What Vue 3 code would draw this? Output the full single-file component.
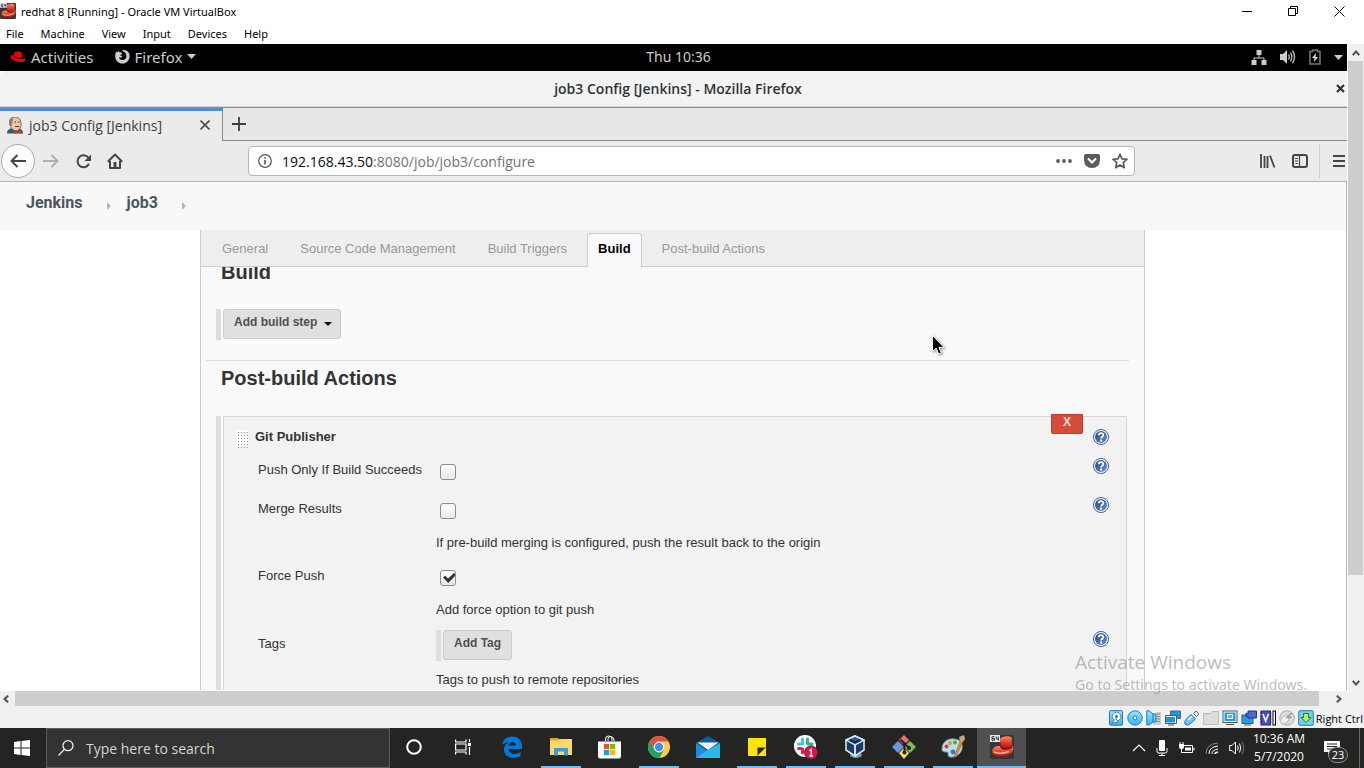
<script setup>
import { ref } from 'vue'

const vmMenu = ['File', 'Machine', 'View', 'Input', 'Devices', 'Help']
const sections = ['General', 'Source Code Management', 'Build Triggers', 'Build', 'Post-build Actions']
const activeSection = ref('Build')
const address = ref('192.168.43.50:8080/job/job3/configure')
const pushOnly = ref(false)
const mergeResults = ref(false)
const forcePush = ref(true)
const search = ref('')
</script>

<template>
  <div class="desktop">
    <svg class="defs" aria-hidden="true">
      <defs>
        <linearGradient id="helpFill" x1="0" y1="0" x2="1" y2="1">
          <stop offset="0" stop-color="#1d4283" />
          <stop offset="1" stop-color="#6b95cf" />
        </linearGradient>
        <linearGradient id="redHat" x1="0" y1="0" x2="0" y2="1">
          <stop offset="0" stop-color="#ff8a60" />
          <stop offset=".5" stop-color="#e8402a" />
          <stop offset="1" stop-color="#9c1610" />
        </linearGradient>
        <linearGradient id="blueBox" x1="0" y1="0" x2="0" y2="1">
          <stop offset="0" stop-color="#9be4ff" />
          <stop offset="1" stop-color="#35b4f5" />
        </linearGradient>
      </defs>
      <symbol id="help" viewBox="0 0 16 16">
        <circle cx="8" cy="8" r="7.5" fill="#fff" stroke="#355f9f" />
        <circle cx="8" cy="8" r="6" fill="url(#helpFill)" />
        <path d="M5.7 6.2C5.8 3.4 10.4 3.5 10.3 6.1C10.3 7.7 8.2 7.7 8.1 9.5" fill="none" stroke="#fff" stroke-width="1.8" />
        <rect x="7.1" y="10.6" width="2" height="2" fill="#fff" />
      </symbol>
      <symbol id="vmhat" viewBox="0 0 24 24">
        <rect width="24" height="24" rx="2" fill="#33363c" />
        <path d="M9 4C12 1 20 0 22 3L22 12C16 15 10 13 11 9Z" fill="url(#redHat)" />
        <path d="M2 16C3 12 6 11 10 11C11 14 17 15 23 11C25 17 19 22 12 21.500C6 21.500 2 20 2 16Z" fill="url(#redHat)" />
        <path d="M10.500 11.500C12 15 18 15 22.500 12" fill="none" stroke="#6e0f0b" stroke-width="1.200" />
        <path d="M4 17Q10 20 19 16.500" fill="none" stroke="#ffab88" stroke-width="1.600" />
        <rect width="10" height="7" fill="#e8eaee" />
        <path d="M4.500 1.700H2V5.300H4.500V3.500H2M6.300 1.500V4H9M8.300 1.500V5.700" fill="none" stroke="#333" />
      </symbol>
    </svg>

    <header class="vm-title">
      <svg class="vm-logo" viewBox="0 0 24 24"><use href="#vmhat" /></svg>
      <span class="vm-name">redhat 8 [Running] - Oracle VM VirtualBox</span>
      <button class="win-btn" aria-label="Minimize"><svg width="11" height="11" viewBox="0 0 11 11"><path d="M0 5.5H10" stroke="#000" /></svg></button>
      <button class="win-btn" aria-label="Restore"><svg width="11" height="11" viewBox="0 0 11 11" fill="none" stroke="#000"><path d="M.5 2.5H7.5V9.5H.5ZM2.5 2.5V.5H9.5V7.5H7.5" /></svg></button>
      <button class="win-btn" aria-label="Close"><svg width="11" height="11" viewBox="0 0 11 11"><path d="M.5 .5L10.500 10.500M10.500 .5L.5 10.500" stroke="#000" /></svg></button>
    </header>
    <nav class="vm-menu">
      <button v-for="m in vmMenu" :key="m">{{ m }}</button>
    </nav>

    <div class="viewport">
      <main class="guest">
        <div class="gnome">
          <button class="gnome-item">
            <svg width="16" height="12" viewBox="0 0 16 12"><path d="M4 3C4 1 6 0 7.500 .8C10 -.2 12 1 12 3L12.500 6C11 8 6 7 4 5Z" fill="#e00" /><path d="M3.500 4C1 4 0 5 .7 6.500C2 9.500 8 11.500 13 11C15.500 10.600 16 8.500 14 7C13 9 6 8 3.500 5.500Z" fill="#e00" /></svg>
            Activities
          </button>
          <button class="gnome-item firefox">
            <svg width="15" height="15" viewBox="0 0 15 15"><path d="M1 2.500L2.600 3.400L4 1.800L4.500 3.500C6 3 7 3.600 7 5L5 6.200C5.500 7 6.500 6.600 7.500 7C6.500 9 4.500 9 4 8C4 11 9 12.500 11 9C12 7 11 4 9 2.800C8 2 7 2 6.500 2.300C8 0 13 1 14.300 5C15.800 10 12 14.600 7.600 14.600C3 14.600 0 11 .2 7.200C.2 5.500 .5 4 1 2.500Z" fill="#ccc" /></svg>
            Firefox
            <svg width="9" height="5" viewBox="0 0 9 5"><path d="M0 0H9L4.500 5Z" fill="#ccc" /></svg>
          </button>
          <time class="gnome-clock">Thu 10:36</time>
          <div class="gnome-tray">
            <svg width="16" height="15" viewBox="0 0 16 15"><path d="M5.500 0H10.500V5H8.500V7.500H13.500V10H15.500V15H10.500V10H12.500V8.500H3.500V10H5.500V15H.5V10H2.500V7.500H7.500V5H5.500Z" fill="#ccc" /></svg>
            <svg width="16" height="14" viewBox="0 0 16 14"><path d="M0 4H3L7 0V14L3 10H0Z" fill="#ccc" /><path d="M8.500 4.500Q10 7 8.500 9.500M10.500 2.500Q13 7 10.500 11.500M12.500 .7Q16.500 7 12.500 13.300" fill="none" stroke="#bbb" stroke-width="1.400" /></svg>
            <svg width="12" height="16" viewBox="0 0 12 16"><path d="M1 2.500H3.500V1H8.500V2.500H11V15H1Z" fill="none" stroke="#777" stroke-width="1.600" /><path d="M7 4L3 9H5.500L5 13L9 8H6.500Z" fill="#ddd" /></svg>
            <svg width="9" height="5" viewBox="0 0 9 5"><path d="M0 0H9L4.500 5Z" fill="#ccc" /></svg>
          </div>
        </div>

        <div class="ff-title">
          <h1>job3 Config [Jenkins] - Mozilla Firefox</h1>
          <button aria-label="Close window"><svg width="9" height="9" viewBox="0 0 9 9"><path d="M1 1L8 8M8 1L1 8" stroke="#2e3436" stroke-width="2.200" /></svg></button>
        </div>

        <div class="ff-tabs">
          <div class="ff-tab">
            <svg width="16" height="17" viewBox="0 0 16 17"><path d="M0 16.500C0 13 2 12 5 11L12 11.500C15 12 16 14 16 16.500Z" fill="#2f5a72" /><path d="M3 4C3 1 6 0 8.500 0C12 0 14 3 14 7C14 11 12 14 9 14C5 13 3 10 3 7Z" fill="#edc9a2" stroke="#5a4438" stroke-width=".8" /><path d="M3 9C1 5 2 1 6 .6L5.500 5L4.500 9Z" fill="#8c7b6e" /><path d="M7.500 5H9M11 5H12.500M8 9.500H12" stroke="#493329" /><path d="M7 13L10.500 14.500L14 13V17L10.500 15.500L7 17Z" fill="#d33833" /></svg>
            <span>job3 Config [Jenkins]</span>
            <button aria-label="Close tab"><svg width="10" height="10" viewBox="0 0 10 10"><path d="M.5 .5L9.500 9.500M9.500 .5L.5 9.500" stroke="#4a4f52" stroke-width="1.600" /></svg></button>
          </div>
          <button class="new-tab" aria-label="New tab"><svg width="14" height="14" viewBox="0 0 14 14"><path d="M7 0V14M0 7H14" stroke="#3b4043" stroke-width="1.800" /></svg></button>
        </div>

        <div class="ff-bar">
          <button class="back" aria-label="Back"><svg width="16" height="14" viewBox="0 0 16 14"><path d="M16 7H1.500M7.500 1L1.500 7L7.500 13" fill="none" stroke="#40464a" stroke-width="2" /></svg></button>
          <button class="tool" aria-label="Forward"><svg width="16" height="14" viewBox="0 0 16 14"><path d="M0 7H14.500M8.500 1L14.500 7L8.500 13" fill="none" stroke="#aeb0b0" stroke-width="2" /></svg></button>
          <button class="tool" aria-label="Reload"><svg width="15" height="15" viewBox="0 0 15 15"><path d="M12.500 3.800A6 6 0 1 0 13 9.800" fill="none" stroke="#40464a" stroke-width="2" /><path d="M15 .5V7H8.500Z" fill="#40464a" /></svg></button>
          <button class="tool" aria-label="Home"><svg width="16" height="16" viewBox="0 0 16 16"><path d="M.8 8.700L8 1.500L15.200 8.700M3 8V15H13V8" fill="none" stroke="#40464a" stroke-width="2" stroke-linejoin="round" /><path d="M6.500 14.500V9H9.500V14.500" fill="#40464a" /></svg></button>
          <div class="url">
            <svg width="14" height="14" viewBox="0 0 14 14"><circle cx="7" cy="7" r="6.300" fill="none" stroke="#555" stroke-width="1.200" /><path d="M7 6V10.500M7 3.200V4.800" stroke="#555" stroke-width="1.600" /></svg>
            <div class="url-field">
              <input v-model="address" aria-label="Address" />
              <span class="url-host" aria-hidden="true"><b>192.168.43.50</b>:8080/job/job3/configure</span>
            </div>
            <button aria-label="Page actions"><svg width="16" height="4" viewBox="0 0 16 4" fill="#5c5c5c"><circle cx="2" cy="2" r="1.900" /><circle cx="8" cy="2" r="1.900" /><circle cx="14" cy="2" r="1.900" /></svg></button>
            <button aria-label="Save to Pocket"><svg width="16" height="14" viewBox="0 0 16 14"><path d="M2 0H14Q16 0 16 2V6Q15.500 14 8 14Q.5 14 0 6V2Q0 0 2 0Z" fill="#5c5c5c" /><path d="M4 4.500L8 8.500L12 4.500" fill="none" stroke="#fff" stroke-width="2" /></svg></button>
            <button aria-label="Bookmark"><svg width="16" height="16" viewBox="0 0 16 16"><path d="M8 1.300L10 5.900L15 6.400L11.200 9.700L12.400 14.700L8 12L3.600 14.700L4.800 9.700L1 6.400L6 5.900Z" fill="none" stroke="#5c5c5c" stroke-width="1.700" stroke-linejoin="round" /></svg></button>
          </div>
          <button class="tool" aria-label="Library"><svg width="16" height="14" viewBox="0 0 16 14"><path d="M1 0V14M4.500 2V14M7.500 2V14M10 1.500L14.500 13.500" fill="none" stroke="#40464a" stroke-width="1.800" /></svg></button>
          <button class="tool" aria-label="Sidebars"><svg width="16" height="14" viewBox="0 0 16 14"><rect x="1" y="1" width="14" height="12" rx="2" fill="none" stroke="#40464a" stroke-width="2" /><path d="M7.500 1V13M3 4.500H6M3 7H6M3.500 9.500H6" stroke="#40464a" stroke-width="1.200" /></svg></button>
          <button class="burger" aria-label="Open menu"><svg width="12" height="12" viewBox="0 0 12 12"><path d="M0 1H12M0 6H12M0 11H12" stroke="#40464a" stroke-width="2" /></svg></button>
        </div>

        <div class="page">
          <nav class="crumbs">
            <a href="#jenkins">Jenkins</a><i></i><a href="#job3">job3</a><i></i>
          </nav>
          <div class="config">
            <nav class="config-tabs">
              <button v-for="s in sections" :key="s" :class="{ active: s === activeSection }" @click="activeSection = s">{{ s }}</button>
            </nav>
            <form class="config-body" @submit.prevent>
              <h2>Build</h2>
              <div class="step"><button type="button" class="yui">Add build step <i class="caret"></i></button></div>
              <hr />
              <h2>Post-build Actions</h2>
              <div class="step publisher-wrap">
                <section class="publisher">
                  <button type="button" class="delete">X</button>
                  <div class="row head">
                    <span class="grip"></span><h3>Git Publisher</h3>
                    <a href="#help-git" aria-label="Help"><svg><use href="#help" /></svg></a>
                  </div>
                  <div class="row first">
                    <label for="push">Push Only If Build Succeeds</label>
                    <input id="push" v-model="pushOnly" type="checkbox" />
                    <a href="#help-push" aria-label="Help"><svg><use href="#help" /></svg></a>
                  </div>
                  <div class="row described">
                    <label for="merge">Merge Results</label>
                    <input id="merge" v-model="mergeResults" type="checkbox" />
                    <a href="#help-merge" aria-label="Help"><svg><use href="#help" /></svg></a>
                  </div>
                  <p>If pre-build merging is configured, push the result back to the origin</p>
                  <div class="row described">
                    <label for="force">Force Push</label>
                    <input id="force" v-model="forcePush" type="checkbox" />
                  </div>
                  <p>Add force option to git push</p>
                  <div class="row tags">
                    <span class="label">Tags</span>
                    <div class="step"><button type="button" class="yui">Add Tag</button></div>
                    <a href="#help-tags" aria-label="Help"><svg><use href="#help" /></svg></a>
                  </div>
                  <p>Tags to push to remote repositories</p>
                </section>
              </div>
            </form>
          </div>
        </div>
        <svg class="cursor" width="13" height="20" viewBox="0 0 13 20"><path d="M.5 .5V16.500L4.200 13.200L6.700 19L9.300 17.900L6.900 12.300H12Z" fill="#000" stroke="#fff" /></svg>
      </main>
      <div class="vscroll">
        <button aria-label="Scroll up"><svg width="8" height="6" viewBox="0 0 8 6"><path d="M.7 5.200L4 1.500L7.300 5.200" fill="none" stroke="#505050" stroke-width="2" /></svg></button>
        <span class="thumb"></span>
        <button aria-label="Scroll down"><svg width="8" height="6" viewBox="0 0 8 6"><path d="M.7 .8L4 4.500L7.300 .8" fill="none" stroke="#505050" stroke-width="2" /></svg></button>
      </div>
      <div class="watermark"><strong>Activate Windows</strong><span>Go to Settings to activate Windows.</span></div>
    </div>

    <div class="hscroll">
      <button aria-label="Scroll left"><svg width="6" height="8" viewBox="0 0 6 8"><path d="M5.200 .7L1.500 4L5.200 7.300" fill="none" stroke="#505050" stroke-width="2" /></svg></button>
      <span class="thumb"></span>
      <button class="right" aria-label="Scroll right"><svg width="6" height="8" viewBox="0 0 6 8"><path d="M.8 .7L4.500 4L.8 7.300" fill="none" stroke="#505050" stroke-width="2" /></svg></button>
    </div>

    <div class="status">
      <svg viewBox="0 0 16 16"><rect x="1.500" y=".7" width="13" height="14.500" rx="1" fill="url(#blueBox)" stroke="#1f78b8" /><circle cx="8.500" cy="6.500" r="4.300" fill="#fff" stroke="#4b87b5" /><circle cx="8.500" cy="6.500" r="1.500" fill="#197bc4" /><path d="M3.500 13L8 8.500L10 12Z" fill="#fff" stroke="#27618b" stroke-width=".8" /></svg>
      <svg viewBox="0 0 16 16"><circle cx="8" cy="8" r="7.200" fill="url(#blueBox)" stroke="#2181bf" /><circle cx="8" cy="8" r="2" fill="#fff" stroke="#2372b5" /></svg>
      <svg viewBox="0 0 16 16"><path d="M10 2H15V15H7Z" fill="#ccc" /><path d="M11 4H14M11 6.500H14M11 9H14M11 11.500H14" stroke="#888" /><path d="M.8 .8H3L7 4H10V12H7L3 15H.8Z" fill="url(#blueBox)" stroke="#1f78b8" /><path d="M7 4V12" stroke="#1f78b8" /></svg>
      <svg viewBox="0 0 16 16"><path d="M5.500 1H15.500V8.500H5.500Z" fill="#1994e5" stroke="#666" /><path d="M.5 6.500H10.500V13H.5Z" fill="#1994e5" stroke="#fff" /><path d="M.5 5.500H11.500V13.500H.5ZM3 15H9" fill="none" stroke="#555" /></svg>
      <svg viewBox="0 0 16 16"><path d="M9.500 3.500L12 1L15 4L12.500 6.500Z" fill="#eee" stroke="#666" /><path d="M7 4.500L11.500 9L6 14C4 15.500 1.500 15 1 14C.3 12.500 1 10.500 2 9.500Z" fill="#65c7fa" stroke="#176fae" /><path d="M4 10L8 6.500" stroke="#fff" stroke-width="1.500" /></svg>
      <svg viewBox="0 0 16 16"><path d="M.6 3.500H7L9 1.500H15.400V14.500H.6Z" fill="#ddd" stroke="#bbb" /></svg>
      <svg viewBox="0 0 16 16"><rect x="1" y="1" width="14" height="11.500" fill="#fff" stroke="#555" /><rect x="2.500" y="2.500" width="11" height="8.500" fill="#1d9df0" /><rect x="5.500" y="4.500" width="5" height="4" fill="#4cb5f6" stroke="#fff" /><path d="M4 14.500H12" stroke="#555" /></svg>
      <svg viewBox="0 0 16 16"><rect x="1" y="5" width="11" height="8.500" fill="#1d9df0" stroke="#555" /><path d="M3 15H10" stroke="#555" /><path d="M5 3L7 4V1H15.500V8H7V6L5 7Z" fill="#5564ce" stroke="#26358a" /></svg>
      <svg viewBox="0 0 16 16"><rect x="1" y="1" width="9.500" height="14" fill="#4b4fb8" stroke="#25286e" /><path d="M0 3H11.500M0 6H11.500M0 9H11.500M0 12H11.500" stroke="#282c79" stroke-dasharray="1.500 8.500" /><path d="M3 4L5.700 11L8.400 4" fill="none" stroke="#fff" stroke-width="1.600" /><rect x="13" y="1" width="2.500" height="14" fill="#fff" stroke="#000" /></svg>
      <svg viewBox="0 0 16 16"><circle cx="8" cy="8" r="7.300" fill="#ddd" stroke="#aaa" /><ellipse cx="6" cy="9.500" rx="3.500" ry="5" fill="#eee" stroke="#bbb" transform="rotate(45 6 9.500)" /><path d="M7 8L13 3M9 8L12.500 7" stroke="#999" stroke-width="1.500" /></svg>
      <svg viewBox="0 0 16 16"><rect x=".7" y=".7" width="14.600" height="14.600" rx="1.500" fill="#67d2fb" stroke="#2b7aac" /><path d="M5.500 3.500H10.500V7.500H13L8 12.500L3 7.500H5.500Z" fill="#b8f05a" stroke="#2d7a1a" /></svg>
      <span>Right Ctrl</span>
    </div>

    <footer class="taskbar">
      <button class="start" aria-label="Start"><svg width="16" height="16" viewBox="0 0 16 16" fill="#fff"><path d="M0 2L6.500 1V7.500H0ZM7.500 .9L16 0V7.500H7.500ZM0 8.500H6.500V15L0 14ZM7.500 8.500H16V16L7.500 15Z" /></svg></button>
      <label class="search">
        <svg width="16" height="16" viewBox="0 0 16 16"><circle cx="10" cy="5.700" r="5" fill="none" stroke="#eee" stroke-width="1.300" /><path d="M6.300 9.400L.5 15.500" stroke="#eee" stroke-width="1.300" /></svg>
        <input v-model="search" placeholder="Type here to search" aria-label="Search" />
      </label>
      <button class="app slim" aria-label="Cortana"><svg width="16" height="16" viewBox="0 0 16 16"><circle cx="8" cy="8" r="6.800" fill="none" stroke="#fff" stroke-width="2" /></svg></button>
      <button class="app" aria-label="Task view"><svg width="16" height="16" viewBox="0 0 16 16" fill="none" stroke="#fff" stroke-width="1.200"><path d="M.6 .5V3H11V.5M.6 5H11V11H.6ZM.6 15.500V13H11V15.500M14.500 0V3M14.500 8V16" /><rect x="13.500" y="4.500" width="2" height="2" fill="#fff" /></svg></button>
      <button class="app" aria-label="Edge"><svg width="22" height="22" viewBox="0 0 22 22"><path d="M1 9C2 3 6 .5 11 .5C18 .5 21 5 21 10V13H7.500C8 19 15 19 19.500 16V20C13 23.500 3 22 3 13.500C3 10 5.500 7 8.500 6C6 6 3 7 1 9ZM7.700 9.500H14.700C14.700 4.700 8 5.200 7.700 9.500Z" fill="#0078d7" fill-rule="evenodd" /></svg></button>
      <button class="app open" aria-label="File Explorer"><svg width="22" height="20" viewBox="0 0 22 20"><path d="M0 1H8L10 3H22V18H0Z" fill="#e7a421" /><path d="M0 3.500H8L9.500 2H22V18H0Z" fill="#ffd76b" /><path d="M4 11H18V18.500H14V14.500H8V18.500H4Z" fill="#3c9ade" /></svg></button>
      <button class="app" aria-label="Microsoft Store"><svg width="23" height="24" viewBox="0 0 23 24"><path d="M7.500 6V4Q7.500 1 10.500 1Q14 1 14 4V6M10 6V4Q10 1.500 12.500 1.500Q16 2 16 5V6" fill="none" stroke="#fff" /><path d="M0 6.500H23V21Q23 23.500 21 23.500H2Q0 23.500 0 21Z" fill="#fff" /><path d="M6 9H11.200V14.200H6Z" fill="#f25022" /><path d="M12 9H17.200V14.200H12Z" fill="#7fba00" /><path d="M6 15H11.200V20.200H6Z" fill="#00a4ef" /><path d="M12 15H17.200V20.200H12Z" fill="#ffb900" /></svg></button>
      <button class="app open" aria-label="Chrome"><svg width="22" height="22" viewBox="0 0 22 22"><circle cx="11" cy="11" r="11" fill="#ffcd41" /><path d="M11 11L1.500 5.500A11 11 0 0 0 11.500 22L16 13.500Z" fill="#1ea362" /><path d="M11 11L6.200 13.800L1.500 5.500A11 11 0 0 1 20.500 5.500H11Z" fill="#de5145" /><circle cx="11" cy="11" r="5.400" fill="#f4f4f4" /><circle cx="11" cy="11" r="4.200" fill="#4c8bf5" /></svg></button>
      <button class="app" aria-label="Mail"><svg width="24" height="22" viewBox="0 0 24 22"><path d="M0 7L12 0L24 7L12 13Z" fill="#0a5ba8" /><path d="M1.500 6.500H22.500L12 14Z" fill="#f2f8fc" /><path d="M0 7L11 14L0 22Z" fill="#1b8de0" /><path d="M24 7L8 16L0 22H24Z" fill="#2bb8ee" /></svg></button>
      <button class="app open" aria-label="Sticky Notes"><svg width="18" height="18" viewBox="0 0 18 18"><path d="M0 0H18V9L9 18H0Z" fill="#fde300" /><path d="M18 9V18H9Z" fill="#fde300" /><path d="M9.500 17.500V9.500H17.500Z" fill="#2a2a2a" /></svg></button>
      <button class="app open" aria-label="Slack"><svg width="24" height="24" viewBox="0 0 24 24"><circle cx="11" cy="11" r="11" fill="#fff" /><g fill="none" stroke-width="3" stroke-linecap="round"><path d="M8.500 4V9M4.500 9H8" stroke="#36c5f0" /><path d="M13.500 4V8.500M14 9H18" stroke="#2eb67d" /><path d="M8.500 14V18M4.500 13.500H7" stroke="#e01e5a" /></g><circle cx="17" cy="17.500" r="6.700" fill="#d6154b" stroke="#222" stroke-width=".6" /><path d="M15.300 15.700L17.300 14.200V21M15.300 21H19" fill="none" stroke="#fff" stroke-width="1.400" /></svg></button>
      <button class="app open" aria-label="VirtualBox"><svg width="20" height="24" viewBox="0 0 20 24"><ellipse cx="11" cy="20" rx="6" ry="3" fill="#7f9aaf" /><path d="M10 1L19 5V15L10 21L1 15V5Z" fill="#183c69" stroke="#d4e3ef" stroke-width="1.600" /><path d="M1 5L10 10L19 5L10 1Z" fill="#2e5f95" stroke="#e2edf5" stroke-width="1.400" /><path d="M10 10V21" stroke="#e2edf5" stroke-width="1.800" /><path d="M5 5L10 7.500L15 5" fill="none" stroke="#10284b" stroke-width="2" /></svg></button>
      <button class="app open" aria-label="Git Bash"><svg width="24" height="24" viewBox="0 0 24 24"><path d="M12 0L17 5L12 11L7 5Z" fill="#f07070" /><path d="M18 6L24 12L18 18L12 12Z" fill="#80bd56" /><path d="M6 6L12 12L6 18L0 12Z" fill="#6797df" /><path d="M12 13L17 18L12 24L7 18Z" fill="#ffe05d" /><path d="M8.500 4.500L12.500 8.500V17M12.500 9L17 12.500" fill="none" stroke="#222" stroke-width="2" /><circle cx="12.500" cy="9" r="2" fill="#222" /><circle cx="17" cy="13" r="2" fill="#222" /><circle cx="12.500" cy="17.500" r="2" fill="#222" /></svg></button>
      <button class="app open" aria-label="Paint"><svg width="24" height="24" viewBox="0 0 24 24"><path d="M1 14C1 7 7 3 13 4C19 4 22 8 21 14C20 19 14 23 9 22C5 21 9 18 6 17C3 17 1 17 1 14Z" fill="#b9ddec" stroke="#7199aa" /><circle cx="5.500" cy="11.500" r="2" fill="#de392d" /><circle cx="9" cy="8" r="2" fill="#e39a18" /><circle cx="14" cy="7.500" r="2" fill="#58a832" /><circle cx="12" cy="17" r="2.400" fill="#277bc8" /><path d="M20 4L13 22L15 22L22 6Z" fill="#e58a24" stroke="#a85b17" stroke-width=".6" /><path d="M18 2L23 0L24 4L22 7L19 6Z" fill="#c8a679" /></svg></button>
      <button class="app open current" aria-label="redhat 8"><svg width="24" height="24" viewBox="0 0 24 24"><use href="#vmhat" /></svg></button>

      <div class="tray">
        <svg width="14" height="8" viewBox="0 0 14 8"><path d="M1 7L7 1L13 7" fill="none" stroke="#fff" stroke-width="1.200" /></svg>
        <svg width="12" height="16" viewBox="0 0 12 16"><rect x="3" y="0" width="6" height="11" rx="1" fill="#fff" /><path d="M1 8V11.500Q1 13 3 13H9Q11 13 11 11.500V8M6 13V15.500M3 15.500H9" fill="none" stroke="#fff" /></svg>
        <svg width="17" height="12" viewBox="0 0 17 12"><path d="M5 3.500H14.500V10.500H4M16 5.500V8.500" fill="none" stroke="#fff" /><path d="M7 5.500H13V8.500H7ZM1 2H6V5Q6 7 4 7H3Q1 7 1 5Z" fill="#fff" /><path d="M2 0V3M5 0V3M3.500 6V11" stroke="#fff" /></svg>
        <svg width="14" height="13" viewBox="0 0 14 13" fill="none"><path d="M1 12Q1 2 13 1" stroke="#888" /><path d="M4 12Q4 5 13 4M7 12Q7 8 13 7" stroke="#fff" /><path d="M10 12Q10 10.500 13 10" stroke="#fff" stroke-width="1.600" /></svg>
        <svg width="16" height="14" viewBox="0 0 16 14" fill="none"><path d="M.6 4.500H3L6.500 1V13L3 9.500H.6ZM8.500 4.500Q10 7 8.500 9.500M10.500 2.500Q13 7 10.500 11.500" stroke="#fff" /><path d="M12.800 .8Q16.500 7 12.800 13.200" stroke="#777" /></svg>
      </div>
      <time class="clock"><span>10:36 AM</span><span>5/7/2020</span></time>
      <button class="notes" aria-label="Notifications">
        <svg width="16" height="15" viewBox="0 0 16 15"><path d="M0 0H16V11H7L4 14.500V11H0Z" fill="#fff" /><path d="M3 3H13M3 5.500H13M3 8H9" stroke="#222" /></svg>
        <b>23</b>
      </button>
      <span class="peek"></span>
    </footer>
  </div>
</template>

<style>
body { margin: 0; overflow: hidden; }
</style>

<style scoped>
* { box-sizing: border-box; }
button { border: 0; padding: 0; background: none; font: inherit; color: inherit; display: flex; align-items: center; justify-content: center; flex: none; }
svg { display: block; flex: none; }
.defs { position: absolute; width: 0; height: 0; }
.desktop { display: flex; flex-direction: column; height: 100vh; background: #fff; font-family: "Noto Sans", sans-serif; font-size: 12px; overflow: hidden; }

.vm-title { display: flex; align-items: center; height: 24px; flex: none; padding-bottom: 2px; color: #000; font-size: 11px; }
.vm-logo { width: 16px; height: 16px; }
.vm-name { flex: 1; padding-left: 5px; }
.win-btn { width: 46px; height: 20px; }
.win-btn:last-child { margin-right: 2px; }
.vm-menu { display: flex; gap: 17px; height: 20px; padding: 0 6px 2px; flex: none; font-size: 11px; }

.viewport { position: relative; display: flex; flex: 1; min-height: 0; background: #fff; }
.guest { position: relative; display: flex; flex-direction: column; flex: 1; min-width: 0; overflow: hidden; margin-bottom: 1px; }
.gnome { display: grid; grid-template-columns: auto auto 1fr auto; align-items: center; height: 27px; flex: none; padding: 0 4px 2px 10px; background: #000; color: #ccc; font-size: 14px; }
.gnome-item { gap: 5px; grid-column: 1; grid-row: 1; font-size: 15px; line-height: 20px; }
.gnome-item.firefox { grid-column: 2; margin-left: 21px; }
.gnome-clock { grid-column: 1 / -1; grid-row: 1; text-align: center; padding-left: 4px; }
.gnome-tray { grid-column: 4; grid-row: 1; display: flex; align-items: center; gap: 13px; padding-top: 1px; }
.ff-title { display: flex; align-items: center; height: 36px; flex: none; padding: 0 2px 1px 20px; background: #f3f3f3; border-radius: 5px 5px 0 0; border-bottom: 1px solid #d2d2cf; color: #2e3436; }
.ff-title h1 { flex: 1; margin: 0; text-align: center; font: 600 14px "Open Sans", sans-serif; }
.ff-tabs { display: flex; height: 34px; flex: none; background: #e7e7e6; border-top: 1px solid #8b8b86; }
.ff-tab { display: flex; align-items: center; gap: 6px; width: 223px; padding: 0 12px 2px 7px; background: #ebebe9; border-top: 3px solid #4a90d9; border-right: 1px solid #8b8b86; color: #3b4043; font: 14px "Open Sans", sans-serif; }
.ff-tab span { flex: 1; }
.new-tab { flex: 1; justify-content: flex-start; padding-left: 9px; border-bottom: 1px solid #8b8b86; }
.ff-bar { display: flex; align-items: center; height: 41px; flex: none; background: #ebebe9; border-bottom: 1px solid #b6b6b3; }
.back { width: 34px; height: 34px; border: 1px solid #aaa; border-radius: 50%; background: #fcfcfc; margin-left: 1px; }
.tool { width: 32px; height: 32px; }
.url { display: flex; align-items: center; gap: 12px; flex: 1; height: 30px; margin: 0 117px; padding: 0 6px 0 9px; background: #fff; border: 1px solid #b6b6b3; border-radius: 4px; font: 14px "Open Sans", sans-serif; color: #737373; }
.url > svg { margin-right: -2px; }
.url-field { flex: 1; position: relative; }
.url-field input { width: 100%; border: 0; padding: 0; font: inherit; color: transparent; background: none; outline: 0; display: block; }
.url-host { position: absolute; inset: 0; pointer-events: none; }
.url-host b { font-weight: 400; color: #0c0c0d; }
.burger { width: 28px; height: 34px; justify-content: flex-start; padding-left: 13px; margin-left: 3px; border-left: 1px solid #d0d0ce; }

.page { display: flex; flex-direction: column; flex: 1; min-height: 0; border-right: 1px solid #b6b6b3; background: #fff; font-family: "Liberation Sans", Arial, sans-serif; font-size: 13px; color: #333; }
.crumbs { display: flex; align-items: center; height: 48px; flex: none; padding: 0 26px 7px; background: #f8f8f8; font: 700 16px Roboto, sans-serif; }
.crumbs a { color: #4d545d; text-decoration: none; }
.crumbs i { margin: 7px 16px 0 24px; border-left: 4px solid #b5b5b5; border-top: 4px solid transparent; border-bottom: 4px solid transparent; }
.config { display: flex; flex-direction: column; flex: 1; min-height: 0; margin: 0 201px 0 200px; border: solid #ccc; border-width: 0 1px; background: #f9f9f9; }
.config-tabs { display: flex; align-items: flex-end; gap: 8px; height: 37px; flex: none; padding-left: 9px; background: #eee; border-bottom: 1px solid #ccc; }
.config-tabs button { height: 34px; padding: 0 11px 4px; color: #999; border: 1px solid transparent; border-bottom: 0; margin-bottom: -1px; }
.config-tabs .active { padding: 0 10px 4px; background: #f9f9f9; border-color: #ccc; border-radius: 4px 4px 0 0; color: #000; font-weight: 700; }
.config-body { flex: 1; min-height: 0; overflow: hidden; padding: 0 15px; }
h2 { margin: -7px 0 0 5px; font-size: 20px; line-height: 24px; font-weight: 700; }
.step { border-left: 5px solid #ddd; padding-left: 2px; height: 31px; }
.config-body > .step { margin-top: 25px; }
.yui { height: 30px; padding: 0 10px 4px; background: #e0e0e0; border: 1px solid #ccc; border-radius: 3px; color: #505050; font-size: 12px; font-weight: 700; }
.caret { margin: 4px -2px 0 7px; border: 4px solid transparent; border-top-color: #000; border-bottom: 0; }
hr { margin: 20px 0 0 -10px; border: 0; border-top: 1px solid #ddd; }
hr + h2 { margin-top: 5px; }
.config-body > .publisher-wrap { height: auto; margin: 26px 2px 0 0; }
.publisher { position: relative; padding: 10px 17px 30px 34px; background: #f2f2f2; border: 1px solid #d6d6d6; line-height: 18px; }
.row { display: grid; grid-template-columns: 178px 1fr 16px; align-items: start; }
.row label, .row .label { padding-top: 3px; }
.row a, .row a svg { display: block; width: 16px; height: 16px; }
.row > a { grid-column: 3; }
.head { grid-template-columns: 20px 1fr 16px; height: 31px; margin-left: -23px; }
.head a { margin-top: 2px; }
.head h3 { margin: 1px 0 0; font-size: 13px; line-height: 18px; }
.grip { width: 12px; height: 18px; margin: 3px 0 0 1px; background: linear-gradient(90deg, #fff 2px, transparent 2px) 0 0 / 3px 3px, linear-gradient(#fff 2px, #8f8f8a 2px) 0 0 / 3px 3px; }
.first { height: 39px; }
.described { height: 37px; }
.publisher p { margin: 0 0 12px 178px; }
.tags { height: 40px; }
.tags .label { padding-top: 4px; }
.tags .step { margin-top: -1px; }
input[type="checkbox"] { appearance: none; width: 16px; height: 16px; margin: 6px 0 0 4px; border: 1px solid #8f8f87; border-radius: 3px; background: linear-gradient(#fff, #e9e9e7); }
input[type="checkbox"]:checked::after { content: ""; display: block; width: 12px; height: 11px; margin: 2px 0 0 2px; background: #2e3436; clip-path: polygon(0 42%, 18% 25%, 42% 50%, 92% 0, 100% 12%, 100% 28%, 44% 92%); }
.delete { position: absolute; top: -3px; right: 43px; width: 32px; height: 20px; padding-bottom: 4px; background: #d54c3b; border: 1px solid #c23a2b; border-radius: 0 0 2px 2px; color: #f4dedb; font-size: 12px; font-weight: 700; }
.cursor { position: absolute; left: 932px; top: 291px; filter: drop-shadow(1px 1px 1px #888); }

.vscroll { display: flex; flex-direction: column; width: 16px; margin-left: 1px; background: #f0f0f0; }
.vscroll button { height: 17px; }
.vscroll .thumb { height: 514px; background: #cdcdcd; margin-right: 1px; }
.vscroll button:last-child { margin-top: auto; }
.watermark { position: absolute; right: 57px; bottom: -5px; display: flex; flex-direction: column; color: rgba(145, 145, 145, .62); font-size: 14px; line-height: 22px; pointer-events: none; }
.watermark strong { font: 400 19px/24px "Open Sans", sans-serif; }
.hscroll { display: flex; height: 15px; flex: none; background: #f0f0f0; }
.hscroll button { width: 15px; padding-right: 3px; }
.hscroll .thumb { flex: 1; background: #cdcdcd; }
.hscroll .right { width: 45px; padding: 0 5px 0 0; }
.status { display: flex; align-items: center; justify-content: flex-end; gap: 3px; height: 22px; flex: none; padding: 2px 1px 0 0; background: #f0f0f0; color: #000; font-family: "Open Sans", sans-serif; font-size: 11px; }
.status svg { width: 16px; height: 16px; }
.status span { margin-left: -1px; }

.taskbar { display: flex; height: 40px; flex: none; background: #242423; color: #fff; font-family: "Open Sans", sans-serif; }
.start { width: 46px; padding-right: 2px; }
.search { display: flex; align-items: center; gap: 12px; width: 344px; padding: 0 11px; background: #333; border: 1px solid #5d5d5d; }
.search input { flex: 1; min-width: 0; border: 0; padding: 0; background: none; outline: 0; color: #fff; font: 14px "Open Sans", sans-serif; }
.search input::placeholder { color: #d4d4d4; opacity: 1; }
.app { width: 49px; border-bottom: 2px solid transparent; position: relative; }
.app.slim { width: 48px; }
.app.open::after { content: ""; position: absolute; left: 5px; right: 4px; bottom: -2px; height: 2px; background: #76b9ed; }
.app.current { background: #505050; background-clip: border-box; border-bottom-color: #76b9ed; }
.app.current::after { display: none; }
.tray { display: flex; align-items: center; gap: 10px; margin-left: auto; }
.clock { display: flex; flex-direction: column; justify-content: center; align-items: center; width: 68px; line-height: 18px; font-size: 12px; }
.notes { position: relative; width: 46px; padding-right: 8px; }
.notes b { position: absolute; left: 15px; top: 19px; width: 20px; height: 16px; border: 1px solid #888; border-radius: 8px; background: #2e2e2e; font-size: 11px; line-height: 14px; font-weight: 400; }
.peek { width: 5px; border-left: 1px solid #666; }
</style>
